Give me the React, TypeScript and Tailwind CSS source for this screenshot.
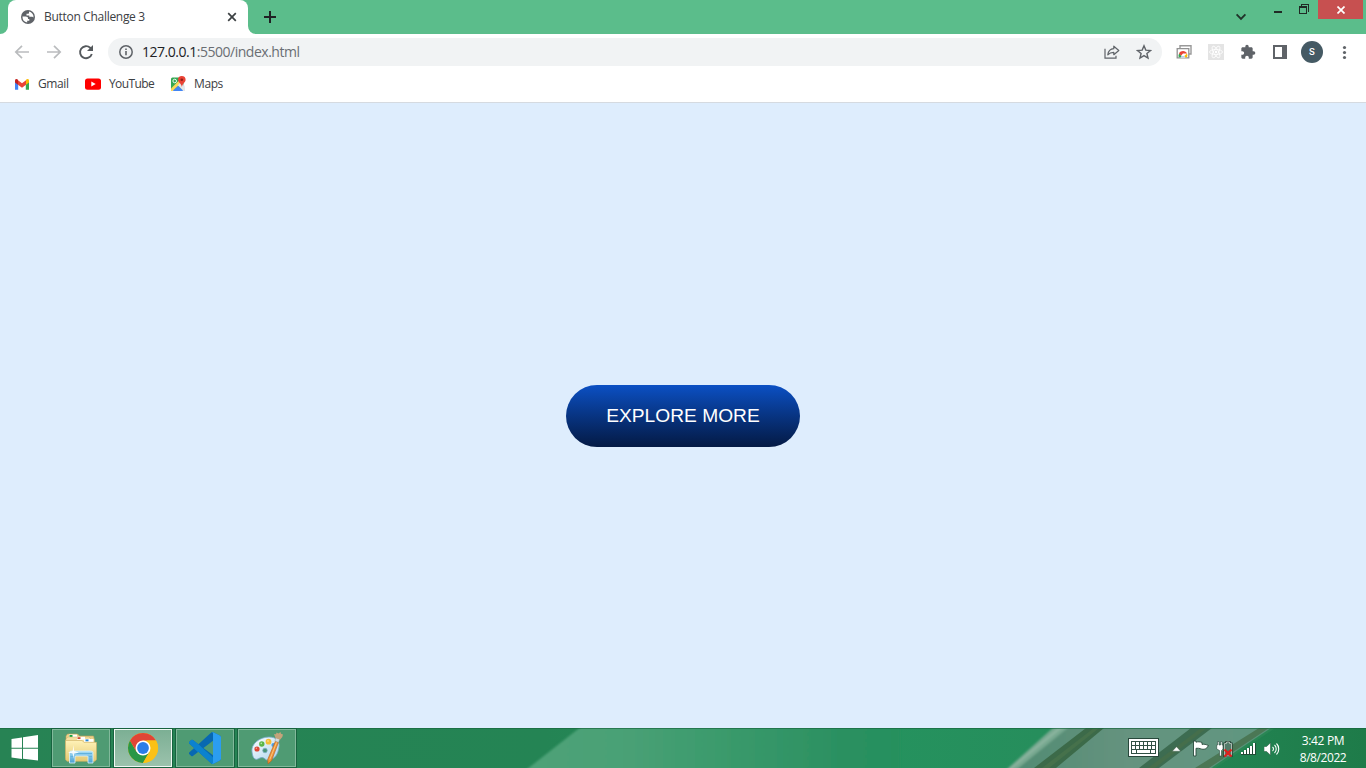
import React from "react";

const ui = "font-['Open_Sans','Noto_Sans',sans-serif]";

function Cell({ children }: { children: React.ReactNode }) {
  return <div className="flex h-8 w-8 shrink-0 items-center justify-center">{children}</div>;
}

function TabStrip() {
  return (
    <div className="flex h-[34px] bg-[#5bbd8b]">
      <svg className="mt-[26px] h-2 w-2 shrink-0" viewBox="0 0 8 8">
        <path d="M8 0A8 8 0 0 1 0 8H8Z" fill="#fff" />
      </svg>
      <div className="flex w-60 shrink-0 items-center rounded-t-lg bg-white pl-3 pr-[9px]">
        <svg className="h-4 w-4 shrink-0" viewBox="0 0 16 16">
          <circle cx="8" cy="8" r="7" fill="#5f6368" />
          <path d="M2.5 7.4h3.2c1.500 0 2.300.7 2.300 1.800v.8h1.300v1.800H7.200v1.700A5.600 5.600 0 0 1 2.500 8Z" fill="#fff" />
          <path d="M9 2.500a5.600 5.600 0 0 1 4.500 6.100c-.5-.6-.9-.9-1.800-.9H9.300V6.400H6.500V4.800h1.400c.7 0 1.100-.4 1.100-1.100Z" fill="#fff" />
        </svg>
        <span className={`ml-2 w-[170px] whitespace-nowrap text-[12px] leading-4 tracking-[-0.3px] text-[#3c4043] ${ui}`}>
          Button Challenge 3
        </span>
        <svg className="ml-auto h-[14px] w-[14px]" viewBox="0 0 14 14">
          <path d="M3.200 3.200l7.600 7.600M10.800 3.200l-7.600 7.600" stroke="#3c4043" strokeWidth="1.700" />
        </svg>
      </div>
      <svg className="mt-[26px] h-2 w-2 shrink-0" viewBox="0 0 8 8">
        <path d="M0 0A8 8 0 0 0 8 8H0Z" fill="#fff" />
      </svg>
      <svg className="ml-[6px] mt-[9px] h-4 w-4" viewBox="0 0 16 16">
        <path d="M8 2v12M2 8h12" stroke="#202124" strokeWidth="2" />
      </svg>
      <div className="ml-auto flex items-start">
        <svg className="mr-[27px] mt-[12px] h-[10px] w-3" viewBox="0 0 12 10">
          <path d="M1.600 2.400L6 6.800l4.400-4.400" fill="none" stroke="#20332a" strokeWidth="1.900" />
        </svg>
        <svg className="mr-4 mt-[11px] h-[3px] w-[9px]" viewBox="0 0 9 3" shapeRendering="crispEdges">
          <path d="M0 0h8v2H0z" fill="#202a25" />
        </svg>
        <svg className="mr-2 mt-1 h-[11px] w-[11px]" viewBox="0 0 11 11" shapeRendering="crispEdges">
          <path d="M2.500 2V.5h7v7H9" fill="none" stroke="#202a25" />
          <path d="M.5 2.500h7v7h-7zM.5 3.500h7" fill="none" stroke="#202a25" />
        </svg>
        <div className="mr-[3px] flex h-[19px] w-[45px] items-center justify-center bg-[#c75050]">
          <svg className="h-2 w-2" viewBox="0 0 8 8">
            <path d="M.5.5l7 7M7.500.5l-7 7" stroke="#fff" strokeWidth="1.700" />
          </svg>
        </div>
      </div>
    </div>
  );
}

function Toolbar() {
  return (
    <div className="flex h-9 items-center bg-white px-[6px]">
      <Cell>
        <svg className="h-4 w-4" viewBox="0 0 16 16" fill="none" stroke="#babcbe" strokeWidth="1.700">
          <path d="M15 8H2.200M8 1.800L1.800 8 8 14.200" />
        </svg>
      </Cell>
      <Cell>
        <svg className="h-4 w-4" viewBox="0 0 16 16" fill="none" stroke="#babcbe" strokeWidth="1.700">
          <path d="M1 8h12.800M8 1.800L14.200 8 8 14.200" />
        </svg>
      </Cell>
      <Cell>
        <svg className="h-4 w-4" viewBox="0 0 16 16">
          <path d="M13.800 10A6 6 0 1 1 12.200 3.800L13.600 5.200" fill="none" stroke="#55595d" strokeWidth="1.900" />
          <path d="M15 1v6H9z" fill="#55595d" />
        </svg>
      </Cell>
      <div className="ml-[6px] flex h-7 flex-1 items-center rounded-full bg-[#f1f3f4] pl-[10px] pr-[2px]">
        <svg className="h-4 w-4" viewBox="0 0 16 16">
          <circle cx="8" cy="8" r="6.200" fill="none" stroke="#5f6368" strokeWidth="1.500" />
          <path d="M7.200 7h1.600v4.300H7.200zM7.200 4.400h1.600V6H7.200z" fill="#5f6368" />
        </svg>
        <div className={`ml-2 whitespace-nowrap text-[14px] leading-5 tracking-[-0.48px] text-[#6a6e73] ${ui}`}>
          <span className="text-[#202124]">127.0.0.1</span>:5500/index.html
        </div>
        <div className="ml-auto flex">
          <Cell>
            <svg className="h-4 w-4" viewBox="0 0 16 16" fill="none" stroke="#5f6368" strokeWidth="1.200">
              <path d="M1 4.800v9.400h11v-2.400" />
              <path d="M3.800 10.800c.5-4 2.400-5.800 6-6.100V2.200L14.800 6.500l-5 4.200V8.300c-2.700 0-4.500.7-6 2.500Z" strokeLinejoin="round" />
            </svg>
          </Cell>
          <Cell>
            <svg className="h-4 w-4" viewBox="0 0 16 16">
              <path d="M8 1.800l1.800 4.300 4.700.4-3.600 3 1.100 4.600L8 11.600l-4 2.500 1.100-4.600-3.600-3 4.700-.4Z" fill="none" stroke="#5f6368" strokeWidth="1.400" />
            </svg>
          </Cell>
        </div>
      </div>
      <div className="ml-[6px] flex">
        <Cell>
          <svg className="h-4 w-4" viewBox="0 0 16 16">
            <path d="M4 4V1.800h11V10h-2" fill="none" stroke="#999" strokeWidth="1.400" />
            <path d="M1.200 4.600h11.600v9.200H1.200z" fill="#fff" stroke="#929292" strokeWidth="1.300" />
            <path d="M2.700 13.200a4.400 4.400 0 0 1 .6-4L6.500 13.200z" fill="#34a853" />
            <path d="M3 9.300c1.900-3.200 6.600-3 8.200.2H7L5 11.800z" fill="#ea4335" />
            <path d="M11 9.500a4.400 4.400 0 0 1 0 3.700H7z" fill="#fbbc04" />
            <path d="M5 13.300a2.200 2.200 0 0 1 4 0z" fill="#4285f4" stroke="#fff" strokeWidth=".7" />
          </svg>
        </Cell>
        <Cell>
          <svg className="h-4 w-4" viewBox="0 0 16 16">
            <path d="M0 0h16v16H0z" fill="#e4e4e4" />
            <g fill="none" stroke="#fff" strokeWidth=".8">
              <ellipse cx="8" cy="8" rx="6.500" ry="2.500" />
              <ellipse cx="8" cy="8" rx="6.500" ry="2.500" transform="rotate(60 8 8)" />
              <ellipse cx="8" cy="8" rx="6.500" ry="2.500" transform="rotate(120 8 8)" />
            </g>
            <circle cx="8" cy="8" r="1.200" fill="#fff" />
          </svg>
        </Cell>
        <Cell>
          <svg className="h-4 w-4" viewBox="0 0 24 24">
            <path d="M20.500 11H19V7c0-1.100-.9-2-2-2h-4V3.500a2.500 2.500 0 0 0-5 0V5H4c-1.100 0-1.990.9-1.990 2v3.800H3.500c1.490 0 2.700 1.210 2.700 2.700s-1.210 2.700-2.700 2.700H2V20c0 1.100.9 2 2 2h3.800v-1.500c0-1.490 1.210-2.700 2.700-2.700s2.700 1.210 2.700 2.700V22H17c1.100 0 2-.9 2-2v-4h1.500a2.500 2.500 0 0 0 0-5z" fill="#5f6368" />
          </svg>
        </Cell>
        <Cell>
          <svg className="h-[14px] w-[14px]" viewBox="0 0 14 14">
            <path d="M0 0h14v14H0zM2 2v10h7V2z" fill="#5f6368" fillRule="evenodd" />
          </svg>
        </Cell>
        <Cell>
          <div className="flex h-[22px] w-[22px] items-center justify-center rounded-full bg-[#455a64] font-['Roboto',sans-serif] text-[9.5px] font-medium leading-none text-white">
            S
          </div>
        </Cell>
        <Cell>
          <svg className="h-4 w-4" viewBox="0 0 16 16" fill="#5f6368">
            <circle cx="8.500" cy="3.500" r="1.600" />
            <circle cx="8.500" cy="8.500" r="1.600" />
            <circle cx="8.500" cy="13.500" r="1.600" />
          </svg>
        </Cell>
      </div>
    </div>
  );
}

function Bookmarks() {
  const label = `whitespace-nowrap text-[12px] leading-4 text-[#3c4043] ${ui}`;
  return (
    <div className="flex h-[33px] border-b border-[#d5dae0] bg-white pb-1 pl-[14px]">
      <div className="flex w-[71px] items-center">
        <svg className="h-4 w-4" viewBox="0 0 16 16">
          <path d="M1 4.500v9.300h3.200V7.200z" fill="#4285f4" />
          <path d="M15 4.500v9.300h-3.200V7.200z" fill="#34a853" />
          <path d="M4 4.300v4.400l4 3 4-3V4.300l-4 3z" fill="#ea4335" />
          <path d="M1 4.800C1 2.700 2.700 2.400 4 3.800v4.900L1 6.500z" fill="#c5221f" />
          <path d="M15 4.800c0-2.100-1.700-2.400-3-1v4.900l3-2.200z" fill="#fbbc04" />
        </svg>
        <span className={`ml-2 tracking-[-0.4px] ${label}`}>Gmail</span>
      </div>
      <div className="flex w-[85px] items-center">
        <svg className="h-4 w-4" viewBox="0 0 16 16">
          <rect y="2.500" width="16" height="11.200" rx="2.500" fill="#f00" />
          <path d="M6.300 5.600v5L10.700 8.100z" fill="#fff" />
        </svg>
        <span className={`ml-2 tracking-[-0.6px] ${label}`}>YouTube</span>
      </div>
      <div className="flex items-center">
        <svg className="h-4 w-4" viewBox="0 0 16 16">
          <path d="M1 3a1.500 1.500 0 0 1 1.500-1.500h11V14H1z" fill="#34a853" />
          <path d="M12 6l2.500 4v4L8 9z" fill="#d5dbe0" />
          <path d="M2.500 15L8 9.500l5.500 5.500z" fill="#4285f4" />
          <path d="M1 12.500L11.500 2 14 4 2.500 15H1z" fill="#fbd75a" />
          <path d="M7.800 9.200l2.700-2.700L15 12v3h-1.500z" fill="#e6e8ea" />
          <circle cx="4.700" cy="5" r="1.800" fill="none" stroke="#fff" strokeWidth=".9" />
          <path d="M11.800 0a3.800 3.800 0 0 1 3.800 3.800c0 2.600-3.200 3.700-3.700 7.200-.6-3.500-3.900-4.600-3.900-7.200A3.800 3.800 0 0 1 11.800 0z" fill="#ea4335" />
          <circle cx="11.800" cy="3.800" r="1.300" fill="#8e2019" />
        </svg>
        <span className={`ml-2 tracking-[-0.4px] ${label}`}>Maps</span>
      </div>
    </div>
  );
}

function Wallpaper() {
  return (
    <svg className="absolute inset-0 h-10 w-full" viewBox="0 0 1366 40" preserveAspectRatio="none">
      <defs>
        <linearGradient id="base"><stop stopColor="#278354" /><stop offset=".4" stopColor="#248454" /><stop offset=".65" stopColor="#25925e" /><stop offset=".76" stopColor="#268e5c" /><stop offset="1" stopColor="#1e7b49" /></linearGradient>
        <linearGradient id="glow"><stop stopColor="#4fa278" /><stop offset=".25" stopColor="#4aa176" /><stop offset=".5" stopColor="#3c9b6d" /><stop offset=".85" stopColor="#2b9061" /><stop offset="1" stopColor="#25905d" /></linearGradient>
        <linearGradient id="glass"><stop stopColor="#508b72" /><stop offset=".45" stopColor="#66937f" /><stop offset="1" stopColor="#609781" /></linearGradient>
        <filter id="soft" x="-5%" y="-20%" width="110%" height="140%"><feGaussianBlur stdDeviation="1" /></filter>
      </defs>
      <path d="M0 0h1366v40H0z" fill="url(#base)" />
      <g filter="url(#soft)">
        <path d="M582-2h318v44H526z" fill="url(#glow)" />
        <path d="M1060-2h215l-66 44h-201z" fill="url(#glass)" />
        <path d="M1055-2h15l-54 44h-10z" fill="#78a991" />
        <path d="M1061-2h3l-54 44h-2z" fill="#91b8a3" />
      </g>
      <path d="M1086 0h18l-48 40h-22z" fill="#3c6a49" />
      <path d="M1094 0h5l-50 40h-7z" fill="#46714b" />
      <path d="M1191 0h21l-53 40h-20z" fill="#3d6c51" />
      <path d="M1201 0h6l-52 40h-7z" fill="#456e4b" />
      <path d="M1259 0h10l-60 40h-14z" fill="#4b7755" />
      <path d="M1273 0l-60 40" stroke="#2a8754" strokeWidth="2" />
      <path d="M0 0h1366v1H0z" fill="#17653e" opacity=".65" />
    </svg>
  );
}

function TaskButton({ active = false, children }: { active?: boolean; children: React.ReactNode }) {
  return (
    <div className="flex h-10 w-[60px] items-center justify-center border border-[#17633f] bg-[#176a42] p-px">
      <div
        className={
          active
            ? "flex h-[38px] w-[58px] shrink-0 items-center justify-center border border-[#f0f8f3] bg-linear-to-b from-[#7caf94] to-[#9bc2ac]"
            : "flex h-[38px] w-[58px] shrink-0 items-center justify-center border border-[#82b99b] bg-[#4f9b73]"
        }
      >
        {children}
      </div>
    </div>
  );
}

function Folder() {
  return (
    <svg className="h-9 w-9" viewBox="0 0 36 36">
      <defs>
        <linearGradient id="fold" x2="0" y2="1"><stop stopColor="#fff2b8" /><stop offset="1" stopColor="#e5c972" /></linearGradient>
        <linearGradient id="stand" x2="0" y2="1"><stop stopColor="#a8def6" /><stop offset="1" stopColor="#4a9fd1" /></linearGradient>
      </defs>
      <path d="M3 6l1.500-2h10l2 2h14l1 4v18H3z" fill="#ead18b" stroke="#c0a35d" strokeWidth=".6" />
      <path d="M6 4.600h8v3H6z" fill="#fff" /><path d="M6.500 5h3v2h-3z" fill="#10a640" />
      <path d="M3 9l2-2h21l2 2v19H3z" fill="#f5dfa0" stroke="#cfb36c" strokeWidth=".5" />
      <path d="M14 6.800h8v3h-8z" fill="#fff" /><path d="M14.500 7.200h3v1.800h-3z" fill="#cc4b2d" />
      <path d="M21 9h9.500v3H21z" fill="#fff" /><path d="M22.500 9.400h3v1.900h-3z" fill="#2687d5" />
      <path d="M2.500 11.500h17l2-2.500H33l1 2.500v17.500l-2 2.500H4.500l-1.500-2z" fill="none" />
      <path d="M2.500 10.500h16.500l2 1.800h12.500v17.200l-1.500 1.800H4l-1.500-1.800z" fill="url(#fold)" stroke="#cdae61" strokeWidth=".6" />
      <path d="M6.500 33V22.500q0-1.500 2-1.500h19q2.500 0 2.500 1.500V33h-5v-6q0-1-1-1H13q-1 0-1 1v6z" fill="url(#stand)" stroke="#d9f2fc" strokeWidth=".8" />
      <path d="M7.500 23.500h21.500M7.500 26.500H11M26 26.500h3" stroke="#62b2dd" strokeWidth="1" />
      <path d="M10.500 15l.6 6 4.900 1.500-4.900 1.200-.6 5-.8-5L5 22.500 9.700 21z" fill="#fff" opacity=".9" />
    </svg>
  );
}

function Chrome() {
  return (
    <svg className="h-8 w-8" viewBox="0 0 32 32">
      <circle cx="16" cy="16" r="15" fill="#fbc116" />
      <path d="M3 8.500L9.500 19.750 16 23.500 15.600 31A15 15 0 0 1 3 8.500z" fill="#299747" />
      <path d="M3 8.500A15 15 0 0 1 29 8.500H16L9.500 19.750z" fill="#e04436" />
      <path d="M22.500 19.750L16 31h-.7L9.500 19.750z" fill="#299747" />
      <path d="M29 8.500A15 15 0 0 1 16 31l6.500-11.250L20 12.500V8.500z" fill="#fbc116" />
      <circle cx="16" cy="16" r="7.500" fill="#fff" />
      <circle cx="16" cy="16" r="5.900" fill="#2a7de8" />
    </svg>
  );
}

function VsCode() {
  return (
    <svg className="h-8 w-8" viewBox="0 0 24 24">
      <defs>
        <clipPath id="code">
          <path clipRule="evenodd" d="M23.150 2.587L18.210.21a1.494 1.494 0 0 0-1.705.29l-9.460 8.630-4.120-3.128a.999.999 0 0 0-1.276.057L.327 7.261A1 1 0 0 0 .326 8.740L3.899 12 .326 15.260a1 1 0 0 0 .001 1.479L1.650 17.940a.999.999 0 0 0 1.276.057l4.120-3.128 9.460 8.630a1.492 1.492 0 0 0 1.704.290l4.942-2.377A1.500 1.500 0 0 0 24 20.060V3.939a1.500 1.500 0 0 0-.850-1.352zm-5.146 14.861L10.826 12l7.178-5.448v10.896z" />
        </clipPath>
      </defs>
      <g clipPath="url(#code)">
        <path d="M0 0h24v24H0z" fill="#0768b1" />
        <path d="M0 5h2.500L24 24.500H17L0 9z" fill="#0b82cf" />
        <path d="M18 0h6v24h-6.700q.7-.3.700-1.300V1.300Q18 .4 17.300 0z" fill="#2b9df0" />
      </g>
    </svg>
  );
}

function Paint() {
  return (
    <svg className="h-8 w-8" viewBox="0 0 32 32">
      <defs><linearGradient id="palette" x2="1" y2="1"><stop stopColor="#fff" /><stop offset="1" stopColor="#a9d3ed" /></linearGradient></defs>
      <path d="M1 20C-.5 12 9 5 18 5c7 0 11 4 10 10-1 7-4 12-10 13-4 .8-4-2.500-7-2.500-3 0-4.500 3-7 1.500-2-1-2.500-4-3-7z" fill="url(#palette)" stroke="#76a9c9" strokeWidth=".8" />
      <circle cx="14" cy="18.500" r="2.300" fill="#4a9477" stroke="#7badc9" strokeWidth=".7" />
      <circle cx="6" cy="17" r="2.600" fill="#dd4634" /><circle cx="5.400" cy="16.300" r=".8" fill="#f5a199" />
      <circle cx="10.800" cy="12" r="2.700" fill="#5bb647" /><circle cx="10.300" cy="11.400" r=".8" fill="#b9e2a9" />
      <circle cx="17.500" cy="9.700" r="2.900" fill="#f5bd37" /><circle cx="17" cy="9" r=".8" fill="#ffe8a4" />
      <circle cx="22.500" cy="13" r="2.100" fill="#4b9ee1" />
      <path d="M24.500 9l3 1.300-7 18.500-3.500 3-.3-4.300z" fill="#ed9339" stroke="#b85e18" strokeWidth=".6" />
      <path d="M25.500 10.500l-6.700 17" stroke="#ffd08d" strokeWidth=".8" />
      <path d="M25 5.500l3.800 1.400-1.200 3.500-3.700-1.500z" fill="#d6dce0" stroke="#838f94" strokeWidth=".4" />
      <path d="M24.500 6L23 2l2 .3L25.500.5l2 1L29.500 0l.5 1.700 2 .8-.7 2.500-2.300 2.700z" fill="#c5a37b" />
    </svg>
  );
}

function Tray() {
  return (
    <div className="flex h-10 items-center">
      <svg className="h-5 w-8" viewBox="0 0 32 20" shapeRendering="crispEdges">
        <path d="M.5.5h30v18H.5z" fill="#fff" stroke="#28483b" />
        <path d="M3 3h25v13H3z" fill="#315044" />
        <g fill="#fff">
          {[0, 1, 2, 3, 4, 5].map((n) => <rect key={n} x={4 + n * 4} y="4" width="3" height="3" />)}
          {[0, 1, 2, 3, 4, 5].map((n) => <rect key={n} x={4 + n * 4} y="8" width="3" height="3" />)}
          <path d="M4 12h4v3H4zM9 12h13v3H9zM23 12h4v3h-4z" />
        </g>
      </svg>
      <svg className="ml-3 mt-[2px] h-[7px] w-[9px]" viewBox="0 0 9 7"><path d="M4.500.7L8.700 5.200H.3z" fill="#fff" stroke="#315044" strokeWidth=".4" /></svg>
      <svg className="ml-3 mt-px h-[18px] w-4" viewBox="0 0 16 18">
        <path d="M.5 1H3v1.200c2-.8 4-.3 6 .2v2c2.500-.4 3.500 0 6.500 1.100C14 7.500 13.500 9.500 10 9.300c-2 0-3-1.400-7-1V16H.5z" fill="#fff" stroke="#294b3c" strokeWidth=".9" />
      </svg>
      <svg className="ml-[7px] mt-px h-[18px] w-[18px]" viewBox="0 0 18 18">
        <path d="M8.500 3.500h2v-1.500h3v1.500h2v12.500H8.500z" fill="#527b69" stroke="#20382d" strokeWidth="2.200" />
        <path d="M8.500 3.500h2v-1.500h3v1.500h2v12.500H8.500z" fill="#527b69" stroke="#b5c4bc" strokeWidth=".9" />
        <path d="M1.500 1.500H3V5h1.500V1.500H6V5h1v4l-1.500 1.500V16h-2v-5.500L.7 9V5h.8z" fill="#fff" stroke="#294b3c" strokeWidth=".6" />
        <path d="M8.500 9.500l7 7M15.500 9.500l-7 7" stroke="#df211d" strokeWidth="2.200" />
      </svg>
      <svg className="ml-[7px] h-4 w-4" viewBox="0 0 16 16" shapeRendering="crispEdges">
        {[2, 4, 6, 8, 11].map((h, n) => <rect key={n} x={n * 3} y={14 - h} width="3" height={h + 1} fill="#214b36" />)}
        {[2, 4, 6, 8, 11].map((h, n) => <rect key={n} x={n * 3} y={14 - h} width="2" height={h} fill="#fff" />)}
      </svg>
      <svg className="ml-[7px] mt-px h-4 w-4" viewBox="0 0 16 16">
        <path d="M0 5.500h2.500L6.500 1.800v12.400L2.500 10.500H0z" fill="#fff" stroke="#214b36" strokeWidth=".5" />
        <path d="M8.500 6c1.300 1 1.300 3 0 4M10.500 4c2.300 2 2.300 6 0 8M12.500 2.500c3 3 3 8 0 11" fill="none" stroke="#fff" strokeWidth="1.100" />
      </svg>
      <div className={`ml-[13px] mr-[13px] w-[60px] whitespace-nowrap pt-[2px] text-center text-[12px] leading-[17px] text-white ${ui}`}>
        <div className="tracking-[-0.35px]">3:42 PM</div>
        <div className="tracking-[-0.42px]">8/8/2022</div>
      </div>
    </div>
  );
}

export default function App() {
  return (
    <div className="flex h-screen w-full flex-col overflow-hidden bg-[#deedfd]">
      <TabStrip />
      <Toolbar />
      <Bookmarks />
      <main className="flex flex-1 items-center justify-center">
        <button className="h-[62px] w-[234px] rounded-full bg-linear-to-b from-[#0b50c4] to-[#041a45] pt-px font-['Liberation_Sans',Arial,sans-serif] text-[19.2px] leading-none text-white">
          EXPLORE MORE
        </button>
      </main>
      <footer className="relative h-10 shrink-0 overflow-hidden">
        <Wallpaper />
        <div className="relative flex h-10 items-center">
          <svg className="ml-[11px] h-[27px] w-[28px] shrink-0" viewBox="0 0 28 27">
            <path d="M.5 4l10.500-1.600v10.300H.5zM12 2.200L27 0v12.700H12zM.5 13.700H11V24L.5 22.400zM12 13.700h15v11.800L12 23.700z" fill="#fff" />
          </svg>
          <div className="ml-3 flex gap-0.5">
            <TaskButton><Folder /></TaskButton>
            <TaskButton active><Chrome /></TaskButton>
            <TaskButton><VsCode /></TaskButton>
            <TaskButton><Paint /></TaskButton>
          </div>
          <div className="ml-auto"><Tray /></div>
        </div>
      </footer>
    </div>
  );
}
